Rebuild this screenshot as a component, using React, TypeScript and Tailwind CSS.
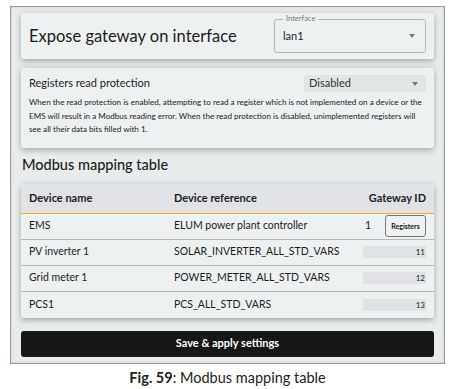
const rows = [
  { name: 'PV inverter 1', ref: 'SOLAR_INVERTER_ALL_STD_VARS', id: 11 },
  { name: 'Grid meter 1', ref: 'POWER_METER_ALL_STD_VARS', id: 12 },
  { name: 'PCS1', ref: 'PCS_ALL_STD_VARS', id: 13 },
];

function Caret() {
  return <span className="ml-auto h-0 w-0 border-x-[3.5px] border-t-[4px] border-x-transparent border-t-[#777]" />;
}

export default function App() {
  return (
    <div className="flex h-[389px] w-[455px] flex-col bg-white font-['Lato',sans-serif] text-[#1c1c1c]">
      <div className="mx-[10px] mt-[6px] flex h-[358px] flex-col border border-[#9a9a9a] bg-[#e8ecec] px-[10px] pt-[6px] shadow-[inset_0_0_3px_rgba(0,0,0,0.15)]">
        {/* interface card */}
        <div className="flex h-[46px] shrink-0 items-center rounded-[3px] bg-[#eef1f1] pl-[8px] pr-[8px] shadow-[0_2px_6px_rgba(0,0,0,0.3)]">
          <h1 className="whitespace-nowrap text-[16.5px]">Expose gateway on interface</h1>
          <div className="relative ml-auto flex h-[34px] w-[152px] items-center rounded-[3px] border border-[#b5b9b9] pl-[8px] pr-[10px] text-[11px]">
            <span className="absolute -top-[6px] left-[8px] bg-[#eef1f1] px-[3px] text-[7.5px] leading-[10px] text-[#777]">Interface</span>
            lan1
            <Caret />
          </div>
        </div>

        {/* read protection card */}
        <div className="mt-[9px] shrink-0 rounded-[3px] bg-[#eef1f1] px-[8px] pb-[11px] pt-[7px] shadow-[0_2px_6px_rgba(0,0,0,0.3)]">
          <div className="flex items-center">
            <span className="text-[11px]">Registers read protection</span>
            <div className="ml-auto flex h-[17px] w-[122px] items-center rounded-[3px] bg-[#e2e5e6] pl-[5px] pr-[8px] text-[11px] text-[#333]">
              Disabled
              <Caret />
            </div>
          </div>
          <p className="mt-[4px] text-[8.1px] leading-[13.5px]">
            When the read protection is enabled, attempting to read a register which is not implemented on a device or the EMS will result in a Modbus reading error. When the read protection is disabled, unimplemented registers will see all their data bits filled with 1.
          </p>
        </div>

        <h2 className="mt-[5px] pl-[1px] text-[14.5px] font-medium leading-[24px]">Modbus mapping table</h2>

        {/* table */}
        <div className="mt-[7px] shrink-0 overflow-hidden rounded-[3px] bg-[#eef1f1] shadow-[0_2px_6px_rgba(0,0,0,0.3)]">
          <div className="flex h-[30px] items-center border-b-[1.5px] border-[#f0b400] bg-[#e1e2e6] px-[8px] text-[11px] font-bold">
            <span className="w-[145px]">Device name</span>
            <span>Device reference</span>
            <span className="ml-auto">Gateway ID</span>
          </div>
          <div className="flex h-[26px] items-center border-b border-[#b7b7b7] px-[8px] text-[10.5px]">
            <span className="w-[145px]">EMS</span>
            <span>ELUM power plant controller</span>
            <span className="ml-auto mr-[14px]">1</span>
            <span className="flex h-[22px] w-[41px] items-center justify-center rounded-[3px] border border-[#777] text-[7px] font-bold">Registers</span>
          </div>
          {rows.map((r, i) => (
            <div key={r.id} className={`flex h-[26px] items-center px-[8px] text-[10.5px] ${i < rows.length - 1 ? 'border-b border-[#b7b7b7]' : ''}`}>
              <span className="w-[145px]">{r.name}</span>
              <span>{r.ref}</span>
              <span className="ml-auto flex h-[12px] w-[63px] items-center justify-end bg-[#e1e2e6] pr-[1px] text-[8px]">{r.id}</span>
            </div>
          ))}
        </div>

        <button className="mt-[13px] flex h-[26px] shrink-0 items-center justify-center rounded-[3px] bg-[#161616] text-[11px] font-bold text-white">
          Save &amp; apply settings
        </button>
      </div>
      <p className="mt-[3px] text-center text-[14.5px] text-[#222]">
        <span className="font-bold">Fig. 59</span>: Modbus mapping table
      </p>
    </div>
  );
}
